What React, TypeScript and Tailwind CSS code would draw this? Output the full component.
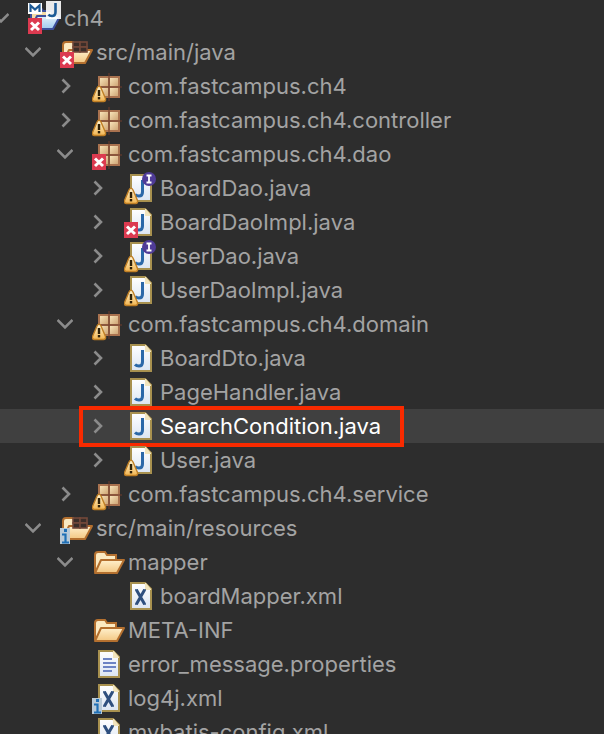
import React from 'react';

type Overlay = 'warn' | 'error' | 'info' | 'iface';
type Kind = 'project' | 'srcError' | 'srcInfo' | 'package' | 'java' | 'xml' | 'text' | 'folder';

interface Row {
    depth: 0 | 1 | 2 | 3;
    label: string;
    kind: Kind;
    arrow?: 'open' | 'closed';
    overlays?: Overlay[];
    selected?: boolean;
}

const rows: Row[] = [
    { depth: 0, label: 'ch4', kind: 'project', arrow: 'open', overlays: ['error'] },
    { depth: 1, label: 'src/main/java', kind: 'srcError', arrow: 'open', overlays: ['error'] },
    { depth: 2, label: 'com.fastcampus.ch4', kind: 'package', arrow: 'closed', overlays: ['warn'] },
    { depth: 2, label: 'com.fastcampus.ch4.controller', kind: 'package', arrow: 'closed', overlays: ['warn'] },
    { depth: 2, label: 'com.fastcampus.ch4.dao', kind: 'package', arrow: 'open', overlays: ['error'] },
    { depth: 3, label: 'BoardDao.java', kind: 'java', arrow: 'closed', overlays: ['warn', 'iface'] },
    { depth: 3, label: 'BoardDaoImpl.java', kind: 'java', arrow: 'closed', overlays: ['error'] },
    { depth: 3, label: 'UserDao.java', kind: 'java', arrow: 'closed', overlays: ['warn', 'iface'] },
    { depth: 3, label: 'UserDaoImpl.java', kind: 'java', arrow: 'closed', overlays: ['warn'] },
    { depth: 2, label: 'com.fastcampus.ch4.domain', kind: 'package', arrow: 'open', overlays: ['warn'] },
    { depth: 3, label: 'BoardDto.java', kind: 'java', arrow: 'closed' },
    { depth: 3, label: 'PageHandler.java', kind: 'java', arrow: 'closed' },
    { depth: 3, label: 'SearchCondition.java', kind: 'java', arrow: 'closed', selected: true },
    { depth: 3, label: 'User.java', kind: 'java', arrow: 'closed', overlays: ['warn'] },
    { depth: 2, label: 'com.fastcampus.ch4.service', kind: 'package', arrow: 'closed', overlays: ['warn'] },
    { depth: 1, label: 'src/main/resources', kind: 'srcInfo', arrow: 'open', overlays: ['info'] },
    { depth: 2, label: 'mapper', kind: 'folder', arrow: 'open' },
    { depth: 3, label: 'boardMapper.xml', kind: 'xml' },
    { depth: 2, label: 'META-INF', kind: 'folder' },
    { depth: 2, label: 'error_message.properties', kind: 'text' },
    { depth: 2, label: 'log4j.xml', kind: 'xml', overlays: ['info'] },
    { depth: 2, label: 'mybatis-config.xml', kind: 'xml' },
];

const indent = { 0: 'pl-0', 1: 'pl-[32px]', 2: 'pl-[64px]', 3: 'pl-[96px]' };

const Arrow = ({ dir }: { dir?: 'open' | 'closed' }) => (
    <svg viewBox="0 0 16 34" className="w-4 h-[34px] shrink-0 mr-[19px]" fill="none" stroke="#8b8b8b" strokeWidth="2.6">
        {dir === 'open' && <path d="M0.5 13l7.5 7.500 7.500-7.500" />}
        {dir === 'closed' && <path d="M5.500 10.500l6.500 6.500-6.500 6.500" />}
    </svg>
);

const Page = () => (
    <g>
        <path d="M7 4h14l6 6v20H7z" fill="url(#page)" stroke="#a8914f" strokeWidth="2" />
        <path d="M21 4h1l5 6v1h-6z" fill="#f1e4bd" />
    </g>
);

const GridBox = ({ x, y, s }: { x: number; y: number; s: number }) => {
    const c = s / 2;
    return (
        <g>
            <rect x={x} y={y} width={s} height={s} fill="#a9724f" />
            <rect x={x + 2} y={y + 2} width={c - 3} height={c - 3} fill="url(#tile)" />
            <rect x={x + c + 1} y={y + 2} width={c - 3} height={c - 3} fill="url(#tile)" />
            <rect x={x + 2} y={y + c + 1} width={c - 3} height={c - 3} fill="url(#tile)" />
            <rect x={x + c + 1} y={y + c + 1} width={c - 3} height={c - 3} fill="url(#tile)" />
            <path d={`M${x + c} ${y - 3}v${s + 6}M${x} ${y + c}h${s + 2}`} stroke="#6e3c2c" strokeWidth="1" />
        </g>
    );
};

const SmallGrid = () => (
    <g fill="#3b2e29" stroke="#74493a" strokeWidth="1.600">
        <rect x="13" y="7" width="7" height="5" />
        <rect x="20" y="7" width="7" height="5" />
        <rect x="13" y="12" width="7" height="5" />
        <rect x="20" y="12" width="7" height="5" />
    </g>
);

const OpenFolder = ({ blue = false }: { blue?: boolean }) => (
    <g>
        <path
            d="M3 27V10q0-3 3-3h7l2 3h9v4"
            fill={blue ? '#f4dba6' : '#fbeac2'}
            stroke={blue ? '#3c4f9c' : '#b4702f'}
            strokeWidth="2"
        />
        <path
            d="M3 28l6-13h23l-7 13z"
            fill={blue ? 'url(#blueFold)' : 'url(#fold)'}
            stroke={blue ? '#3c4f9c' : '#b4702f'}
            strokeWidth="2"
            strokeLinejoin="round"
        />
    </g>
);

const OverlayMark = ({ type }: { type: Overlay }) => {
    if (type === 'warn') {
        return (
            <g>
                <path d="M5 19q2-3.500 4 0l4.500 10.500q.5 3-2 3H2.500q-2.500 0-2-3z" fill="url(#warn)" stroke="#c07f25" strokeWidth="1.400" strokeLinejoin="round" />
                <rect x="5.800" y="21" width="2.400" height="6" fill="#2e2008" />
                <rect x="5.800" y="28" width="2.400" height="2.400" fill="#2e2008" />
            </g>
        );
    }
    if (type === 'error') {
        return (
            <g>
                <rect x="0" y="17" width="14" height="16" fill="#dc3a50" />
                <path d="M3 21.500l8 7.500M11 21.500l-8 7.500" stroke="#ffffff" strokeWidth="3" />
            </g>
        );
    }
    if (type === 'iface') {
        return (
            <g>
                <circle cx="25" cy="8" r="7" fill="#4f3b97" />
                <path d="M22.500 4.500h5M22.500 11.500h5M25 4.500v7" stroke="#ffffff" strokeWidth="1.800" />
            </g>
        );
    }
    return (
        <g>
            <rect x="0" y="17" width="10" height="16" fill="#b9cad8" />
            <rect x="4" y="18" width="3" height="3" fill="#1f6fb5" />
            <path d="M2 23.500h3.500v8M2 31.500h7" stroke="#1f6fb5" strokeWidth="2.200" fill="none" />
        </g>
    );
};

const KindIcon = ({ kind }: { kind: Kind }) => {
    if (kind === 'package') return <GridBox x={6} y={7} s={22} />;
    if (kind === 'folder') return <OpenFolder />;
    if (kind === 'java') {
        return (
            <g>
                <Page />
                <path d="M18.500 9v12q0 4-3.500 4-2.500 0-4-1.500" fill="none" stroke="#2b68a8" strokeWidth="3" />
            </g>
        );
    }
    if (kind === 'xml') {
        return (
            <g>
                <Page />
                <path d="M11 11h3M19 11h3M11 25h3M19 25h3" stroke="#2e4f7e" strokeWidth="1.500" />
                <path d="M12.500 11l8 14M20.500 11l-8 14" stroke="#2e4f7e" strokeWidth="3" />
            </g>
        );
    }
    if (kind === 'text') {
        return (
            <g>
                <Page />
                <path d="M11 12h9M11 16h13M11 20h13M11 24h9" stroke="#6d84c4" strokeWidth="2" />
            </g>
        );
    }
    if (kind === 'project') {
        return (
            <g>
                <OpenFolder blue />
                <rect x="0" y="2" width="14" height="11" fill="#ffffff" />
                <path d="M2.500 11V4.500l4.500 4 4.500-4V11" fill="none" stroke="#1d5a96" strokeWidth="2.200" />
                <rect x="18" y="0" width="15" height="18" fill="#ffffff" opacity="0.9" />
                <path d="M27.500 2v9q0 4-3.500 4-2.500 0-3.500-1.500" fill="none" stroke="#1d5a96" strokeWidth="2.600" />
            </g>
        );
    }
    return (
        <g>
            <OpenFolder />
            <SmallGrid />
        </g>
    );
};

const TreeIcon = ({ kind, overlays = [] }: { kind: Kind; overlays?: Overlay[] }) => (
    <svg viewBox="0 0 36 34" className="w-9 h-[34px] shrink-0">
        <KindIcon kind={kind} />
        {overlays.map(o => (
            <OverlayMark key={o} type={o} />
        ))}
    </svg>
);

const App: React.FC = () => {
    return (
        <div className="w-[604px] h-[734px] overflow-hidden bg-[#2d2d2d] pt-px font-['Inter',sans-serif] text-[22px] text-[#a3a3a3]">
            <svg className="absolute w-0 h-0">
                <defs>
                    <linearGradient id="page" x1="0" y1="0" x2="0" y2="1">
                        <stop offset="0" stopColor="#ffffff" />
                        <stop offset="1" stopColor="#dbe5f2" />
                    </linearGradient>
                    <linearGradient id="tile" x1="0" y1="0" x2="1" y2="1">
                        <stop offset="0" stopColor="#f7e3b8" />
                        <stop offset="1" stopColor="#cfa676" />
                    </linearGradient>
                    <linearGradient id="fold" x1="0" y1="0" x2="0" y2="1">
                        <stop offset="0" stopColor="#fff0cc" />
                        <stop offset="1" stopColor="#f3c782" />
                    </linearGradient>
                    <linearGradient id="blueFold" x1="0" y1="0" x2="0" y2="1">
                        <stop offset="0" stopColor="#e4f1fb" />
                        <stop offset="1" stopColor="#9fcbef" />
                    </linearGradient>
                    <linearGradient id="warn" x1="0" y1="0" x2="0" y2="1">
                        <stop offset="0" stopColor="#fff6d6" />
                        <stop offset="1" stopColor="#f3b550" />
                    </linearGradient>
                </defs>
            </svg>

            {rows.map(row => (
                <div
                    key={row.label}
                    className={`relative flex items-center h-[34px] w-[611px] -ml-[7px] whitespace-nowrap ${indent[row.depth]} ${row.selected ? 'bg-[#404040] text-white' : ''}`}
                >
                    <Arrow dir={row.arrow} />
                    <TreeIcon kind={row.kind} overlays={row.overlays} />
                    <span>{row.label}</span>
                    {row.selected && (
                        <div className="absolute left-[86px] -top-[3px] w-[325px] h-[41px] border-[4px] border-[#f82a00]" />
                    )}
                </div>
            ))}
        </div>
    );
};

export default App;
